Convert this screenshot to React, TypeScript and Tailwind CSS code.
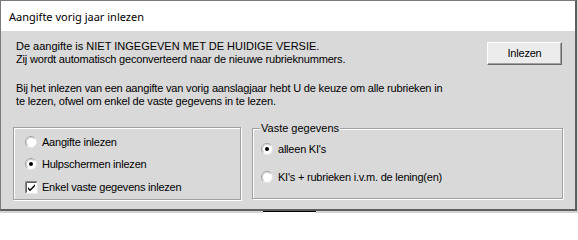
import React from "react";

const face = "bg-[#d9d9d9]";
const etched = "border border-[#a0a0a0] shadow-[inset_1px_1px_0_#fff,1px_1px_0_#fff]";

function Radio({ checked }: { checked?: boolean }) {
  return (
    <svg width="12" height="12" viewBox="0 0 12 12" className="shrink-0">
      <circle cx="6" cy="6" r="5.5" fill="#fff" />
      <path d="M2.1 9.9 A5.5 5.5 0 0 1 9.9 2.1" stroke="#a0a0a0" strokeWidth="1" fill="none" />
      <path d="M9.9 2.1 A5.5 5.5 0 0 1 2.1 9.9" stroke="#e6e6e6" strokeWidth="1" fill="none" />
      <path d="M2.8 9.2 A4.5 4.5 0 0 1 9.2 2.8" stroke="#cdcdcd" strokeWidth="1" fill="none" />
      {checked && <circle cx="6" cy="6" r="2" fill="#000" />}
    </svg>
  );
}

function Check({ checked }: { checked?: boolean }) {
  return (
    <svg width="13" height="13" viewBox="0 0 13 13" className="shrink-0">
      <rect x="0" y="0" width="13" height="13" fill="#fff" />
      <path d="M0.5 12.5 V0.5 H12.5" stroke="#8a8a8a" fill="none" />
      <path d="M1.5 11.5 V1.5 H11.5" stroke="#5a5a5a" fill="none" />
      <path d="M12.5 0.5 V12.5 H0.5" stroke="#e8e8e8" fill="none" />
      {checked && (
        <path d="M3 6 L5 8.2 L10 3.2 V5.2 L5 10.2 L3 8 Z" fill="#000" />
      )}
    </svg>
  );
}

function Option({ kind, checked, label, className }: { kind: "radio" | "check"; checked?: boolean; label: string; className?: string }) {
  return (
    <div className={`flex items-center h-[22px] ${className ?? ""}`}>
      {kind === "radio" ? <Radio checked={checked} /> : <Check checked={checked} />}
      <span className={`tracking-[-0.22px] ${kind === "radio" ? "ml-[5px]" : "ml-[4px]"}`}>{label}</span>
    </div>
  );
}

export default function App() {
  return (
    <div
      className="w-[578px] h-[213px] bg-[#d4d4d4] overflow-hidden text-black"
      style={{ fontFamily: '"Liberation Sans", Arial, sans-serif' }}
    >
      <div className="w-[577px] h-[211px] flex flex-col border-l border-t border-r-2 border-b-2 border-l-[#7a7a7a] border-t-[#7a7a7a] border-r-[#5e5e5e] border-b-[#5e5e5e]">
        {/* title bar */}
        <div className="h-[30px] bg-white flex items-center pl-[8px] shrink-0">
          <span className="text-[11px] leading-none pt-[1px]" style={{ fontFamily: '"Noto Sans", "Open Sans", sans-serif' }}>
            Aangifte vorig jaar inlezen
          </span>
        </div>

        {/* body */}
        <div className={`flex-1 ${face} text-[11px] leading-[13px]`}>
          <div className="flex justify-between pl-[15px] pr-[13px] pt-[9px]">
            <div className="flex flex-col gap-[16px]">
              <p>
                De aangifte is NIET INGEGEVEN MET DE HUIDIGE VERSIE.
                <br />
                <span className="tracking-[-0.18px]">Zij wordt automatisch geconverteerd naar de nieuwe rubrieknummers.</span>
              </p>
              <p className="tracking-[-0.18px]">
                Bij het inlezen van een aangifte van vorig aanslagjaar hebt U de keuze om alle rubrieken in
                <br />
                te lezen, ofwel om enkel de vaste gegevens in te lezen.
              </p>
            </div>
            <button className="mt-[2px] w-[75px] h-[23px] bg-[#ececec] border border-t-[#fdfdfd] border-l-[#fdfdfd] border-r-[#6a6a6a] border-b-[#6a6a6a] shadow-[inset_-1px_-1px_0_#a0a0a0] text-[11px] tracking-[-0.2px] shrink-0">
              Inlezen
            </button>
          </div>

          <div className="flex items-start pl-[12px] mt-[14px] gap-[11px]">
            <div className={`w-[228px] h-[73px] mt-[5px] ${etched} flex flex-col pl-[11px] pt-[3px]`}>
              <Option kind="radio" label="Aangifte inlezen" />
              <Option kind="radio" checked label="Hulpschermen inlezen" />
              <Option kind="check" checked label="Enkel vaste gegevens inlezen" className="mt-[1px]" />
            </div>

            <fieldset className={`w-[311px] h-[77px] ${etched} pl-[7px]`}>
              <legend className={`${face} px-[1px] leading-[13px]`}>Vaste gegevens</legend>
              <div className="flex flex-col gap-[6px] pt-[3px] pl-[1px]">
                <Option kind="radio" checked label="alleen KI's" />
                <Option kind="radio" label="KI's + rubrieken i.v.m. de lening(en)" />
              </div>
            </fieldset>
          </div>
        </div>
      </div>
      <div className="flex h-[2px]">
        <div className="w-[263px]" />
        <div className="w-[53px] bg-white border-t border-black" />
      </div>
    </div>
  );
}
